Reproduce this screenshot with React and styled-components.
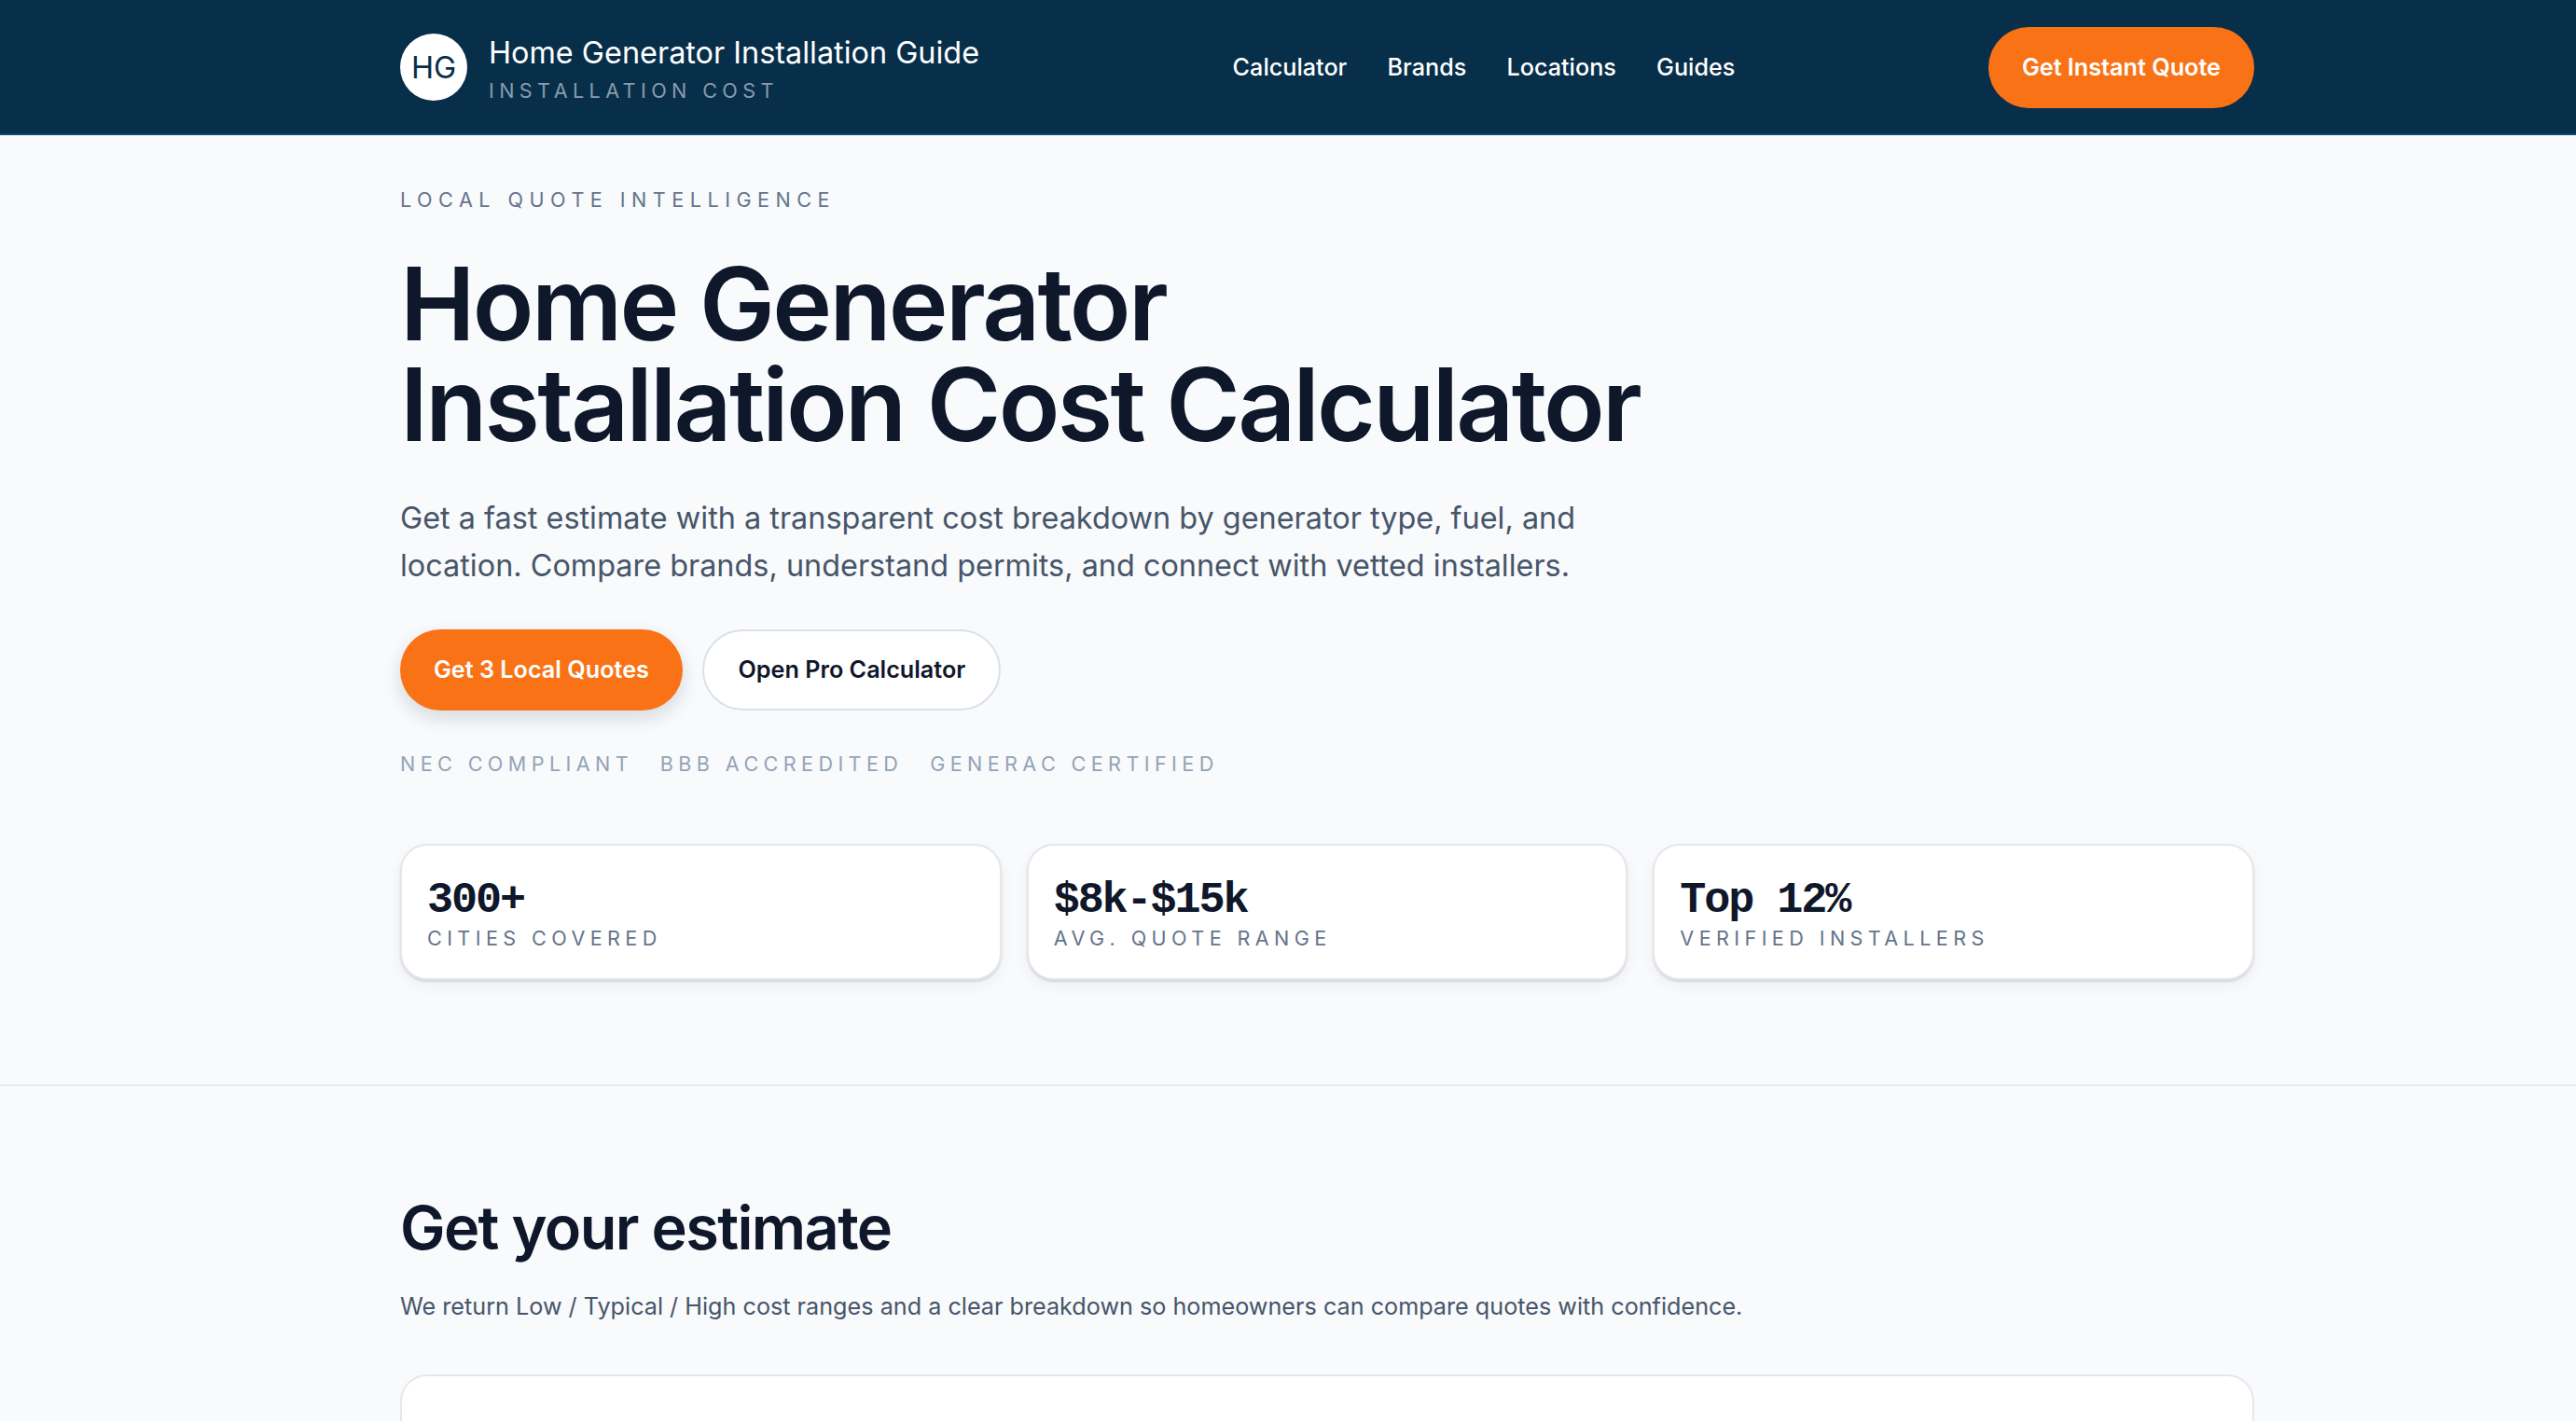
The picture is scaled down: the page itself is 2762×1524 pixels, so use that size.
import React from 'react';
import styled, { createGlobalStyle } from 'styled-components';

const GlobalStyle = createGlobalStyle`
  html, body {
    margin: 0;
    height: 100%;
    overflow: hidden;
    background: #f8fafc;
    font-family: Inter, "Noto Sans", sans-serif;
  }
  * { box-sizing: border-box; }
`;

const Header = styled.header`
  height: 145px;
  padding: 1px 345px 0 429px;
  display: flex;
  align-items: center;
  justify-content: space-between;
  background: #072f4a;
  border-bottom: 2px solid #0b4a6f;
`;

const Brand = styled.div`
  display: flex;
  align-items: center;
  gap: 23px;
`;

const Logo = styled.div`
  width: 72px;
  height: 72px;
  border-radius: 50%;
  background: #fff;
  color: #072f4a;
  display: flex;
  align-items: center;
  justify-content: center;
  font-size: 32.4px;
`;

const BrandText = styled.div`
  display: flex;
  flex-direction: column;
  padding-top: 5px;
`;

const BrandTitle = styled.div`
  color: #fff;
  font-size: 32.4px;
  line-height: 40px;
`;

const BrandSub = styled.div`
  color: #8a9bab;
  font-size: 21.6px;
  line-height: 32px;
  letter-spacing: 0.25em;
  margin-top: 4px;
`;

const Nav = styled.nav`
  display: flex;
  gap: 43.2px;
`;

const NavLink = styled.a`
  color: #fff;
  font-size: 25.2px;
  font-weight: 500;
`;

const PillButton = styled.a`
  height: 87px;
  padding: 0 36px;
  display: inline-flex;
  align-items: center;
  border-radius: 999px;
  font-size: 25.2px;
  font-weight: 600;
  background: ${(p) => (p.$ghost ? '#fff' : '#f97316')};
  color: ${(p) => (p.$ghost ? '#0f172a' : '#fff')};
  border: ${(p) => (p.$ghost ? '2px solid #dbe1ea' : 'none')};
  box-shadow: ${(p) => (p.$shadow ? '0 8px 20px rgba(15, 23, 42, 0.14)' : 'none')};
`;

const Hero = styled.section`
  padding: 53px 345px 112px 429px;
  border-bottom: 2px solid #e8ecf2;
`;

const Eyebrow = styled.div`
  color: #64748b;
  font-size: 21.6px;
  line-height: 32px;
  letter-spacing: 0.3em;
`;

const Title = styled.h1`
  margin: 42px 0 0;
  color: #0f172a;
  font-size: 108px;
  line-height: 108px;
  font-weight: 600;
  letter-spacing: -0.025em;
`;

const Lead = styled.p`
  margin: 42px 0 0;
  width: 1296px;
  color: #475569;
  font-size: 32.4px;
  line-height: 51px;
`;

const Actions = styled.div`
  display: flex;
  gap: 21.6px;
  margin-top: 42.6px;
`;

const Badges = styled.div`
  display: flex;
  gap: 28.8px;
  margin-top: 41.4px;
`;

const Badge = styled.span`
  color: #94a3b8;
  font-size: 21.6px;
  line-height: 32px;
  letter-spacing: 0.25em;
`;

const Stats = styled.div`
  display: grid;
  grid-template-columns: repeat(3, 1fr);
  gap: 27px;
  margin-top: 70px;
`;

const StatCard = styled.div`
  height: 146px;
  padding: 35px 27px 0;
  background: #fff;
  border: 2px solid #e5e7eb;
  border-radius: 28.8px;
  box-shadow: 0 2px 2px rgba(15, 23, 42, 0.12), 0 6px 16px rgba(15, 23, 42, 0.05);
`;

const StatValue = styled.div`
  color: #0f172a;
  font-family: "Liberation Mono", monospace;
  font-size: 46.8px;
  line-height: 48px;
  font-weight: 700;
  letter-spacing: -0.045em;
`;

const StatLabel = styled.div`
  color: #64748b;
  font-size: 21.6px;
  line-height: 32px;
  letter-spacing: 0.25em;
`;

const Estimate = styled.section`
  padding: 112.5px 345px 0 429px;
`;

const Heading = styled.h2`
  margin: 0;
  color: #0f172a;
  font-size: 64.8px;
  line-height: 80px;
  font-weight: 600;
  letter-spacing: -0.025em;
`;

const Intro = styled.p`
  margin: 22.5px 0 0;
  color: #475569;
  font-size: 25.2px;
  line-height: 42px;
`;

const FormCard = styled.div`
  height: 400px;
  margin-top: 52px;
  background: #fff;
  border: 2px solid #e5e7eb;
  border-radius: 28.8px;
`;

const navItems = ['Calculator', 'Brands', 'Locations', 'Guides'];
const badges = ['NEC COMPLIANT', 'BBB ACCREDITED', 'GENERAC CERTIFIED'];
const stats = [
  { value: '300+', label: 'CITIES COVERED' },
  { value: '$8k-$15k', label: 'AVG. QUOTE RANGE' },
  { value: 'Top 12%', label: 'VERIFIED INSTALLERS' },
];

const App = () => (
  <>
    <GlobalStyle />
    <Header>
      <Brand>
        <Logo>HG</Logo>
        <BrandText>
          <BrandTitle>Home Generator Installation Guide</BrandTitle>
          <BrandSub>INSTALLATION COST</BrandSub>
        </BrandText>
      </Brand>
      <Nav>
        {navItems.map((item) => <NavLink key={item}>{item}</NavLink>)}
      </Nav>
      <PillButton>Get Instant Quote</PillButton>
    </Header>
    <Hero>
      <Eyebrow>LOCAL QUOTE INTELLIGENCE</Eyebrow>
      <Title>Home Generator<br />Installation Cost Calculator</Title>
      <Lead>
        Get a fast estimate with a transparent cost breakdown by generator type, fuel, and location. Compare brands, understand permits, and connect with vetted installers.
      </Lead>
      <Actions>
        <PillButton $shadow>Get 3 Local Quotes</PillButton>
        <PillButton $ghost>Open Pro Calculator</PillButton>
      </Actions>
      <Badges>
        {badges.map((badge) => <Badge key={badge}>{badge}</Badge>)}
      </Badges>
      <Stats>
        {stats.map((stat) => (
          <StatCard key={stat.label}>
            <StatValue>{stat.value}</StatValue>
            <StatLabel>{stat.label}</StatLabel>
          </StatCard>
        ))}
      </Stats>
    </Hero>
    <Estimate>
      <Heading>Get your estimate</Heading>
      <Intro>We return Low / Typical / High cost ranges and a clear breakdown so homeowners can compare quotes with confidence.</Intro>
      <FormCard />
    </Estimate>
  </>
);

export default App;
